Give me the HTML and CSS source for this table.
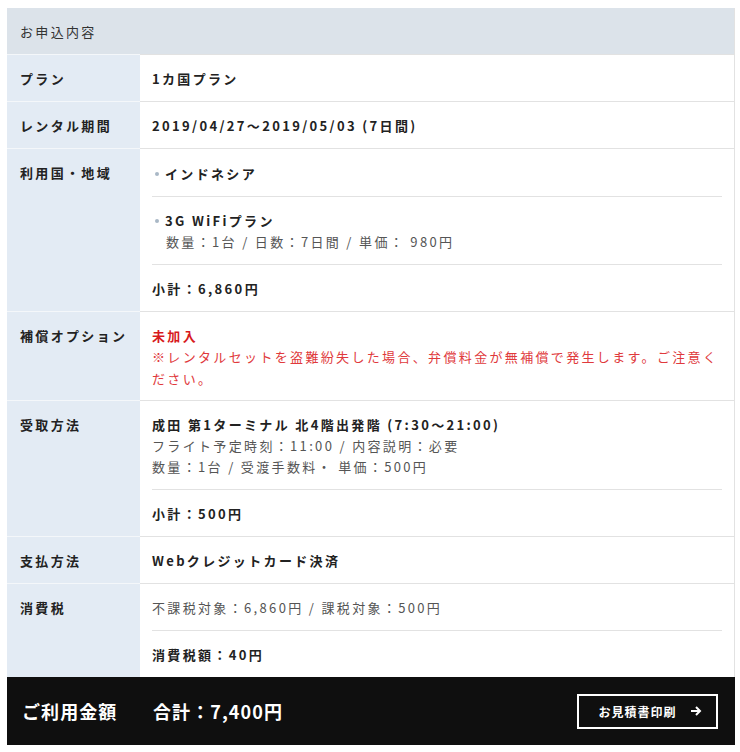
FILE: index.html
```html
<!DOCTYPE html>
<html lang="ja">
<head>
    <title>お申込内容</title>
    <meta charset="utf-8">
    <meta name="viewport" content="width=device-width, initial-scale=1">
    <link rel="stylesheet" href="styles.css">
</head>
<body>
    <div class="order">
        <div class="order-head">お申込内容</div>

        <div class="row">
            <div class="label">プラン</div>
            <div class="value"><div class="block">1カ国プラン</div></div>
        </div>

        <div class="row">
            <div class="label">レンタル期間</div>
            <div class="value"><div class="block">2019/04/27〜2019/05/03 (7日間)</div></div>
        </div>

        <div class="row">
            <div class="label">利用国・地域</div>
            <div class="value">
                <div class="block first"><span class="dot"></span>インドネシア</div>
                <div class="block">
                    <div><span class="dot"></span>3G WiFiプラン</div>
                    <div class="sub indent">数量：1台 / 日数：7日間 / 単価： 980円</div>
                </div>
                <div class="block">小計：6,860円</div>
            </div>
        </div>

        <div class="row">
            <div class="label">補償オプション</div>
            <div class="value">
                <div class="block warn">
                    <div>未加入</div>
                    <div class="note">※レンタルセットを盗難紛失した場合、弁償料金が無補償で発生します。ご注意ください。</div>
                </div>
            </div>
        </div>

        <div class="row">
            <div class="label">受取方法</div>
            <div class="value">
                <div class="block">
                    <div>成田 第1ターミナル 北4階出発階 (7:30〜21:00)</div>
                    <div class="sub">フライト予定時刻：11:00 / 内容説明：必要</div>
                    <div class="sub">数量：1台 / 受渡手数料・ 単価：500円</div>
                </div>
                <div class="block">小計：500円</div>
            </div>
        </div>

        <div class="row">
            <div class="label">支払方法</div>
            <div class="value"><div class="block">Webクレジットカード決済</div></div>
        </div>

        <div class="row">
            <div class="label">消費税</div>
            <div class="value">
                <div class="block sub">不課税対象：6,860円 / 課税対象：500円</div>
                <div class="block">消費税額：40円</div>
            </div>
        </div>

        <div class="total">
            <div class="total-label">ご利用金額</div>
            <div class="total-sum">合計：7,400円</div>
            <a class="print-btn" href="#">お見積書印刷
                <svg width="12" height="12" viewBox="0 0 12 12"><path d="M1 6h9M6 2l4 4-4 4" fill="none" stroke="#fff" stroke-width="2"/></svg>
            </a>
        </div>
    </div>
</body>
</html>
```

FILE: styles.css
```css
body { margin: 0; background: #fff; font-family: "Noto Sans CJK JP", "Noto Sans", sans-serif; color: #222; }
.order { margin: 8px 5px 6px 7px; font-size: 13px; letter-spacing: 0.18em; }
.order-head { background: #dce3ea; padding: 13px 13px 12px; line-height: 21px; border-right: 1px solid #e2e2e2; color: #333; }

.row { display: grid; grid-template-columns: 133px 1fr; }
.label { background: #e3ebf4; padding: 13px 2px 12px 13px; line-height: 21px; font-weight: bold; border-top: 1px solid #f4f7fa; white-space: nowrap; }
.value { padding: 0 12px; border-top: 1px solid #e2e2e2; border-right: 1px solid #e2e2e2; font-weight: bold; line-height: 21px; }
.block { padding: 13px 0 12px; }
.block.first { padding-top: 14px; }
.block + .block { border-top: 1px solid #e2e2e2; }

.sub { font-weight: normal; color: #555; }
.indent { padding-left: 14px; }
.dot { display: inline-block; width: 4px; height: 4px; border-radius: 50%; background: #a9b8c6; margin: 0 6px 3px 3px; vertical-align: middle; }

.warn { color: #d7191c; padding-bottom: 11px; }
.note { font-weight: normal; color: #e0393c; line-height: 21.5px; }

.total { display: flex; align-items: center; background: #0f0f0f; color: #fff; height: 68px; padding: 0 17px 0 15px; font-weight: bold; }
.total-label { width: 131px; font-size: 18px; letter-spacing: 0.06em; }
.total-sum { flex: 1; font-size: 18px; letter-spacing: 0.06em; }
.print-btn { display: flex; align-items: center; justify-content: center; gap: 14px; width: 131px; height: 31px; border: 2px solid #fff; color: #fff; text-decoration: none; font-size: 12px; letter-spacing: 0.08em; padding-left: 6px; box-sizing: content-box; }
```
